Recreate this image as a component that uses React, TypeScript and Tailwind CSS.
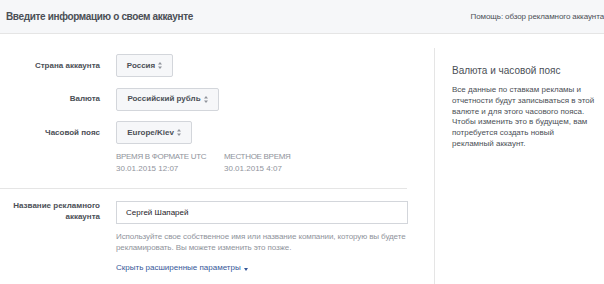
const UpDown = () => (
  <svg width="4" height="7" viewBox="0 0 4 7" className="ml-[3px] inline-block">
    <path d="M2 0 L4 2.5 L0 2.5 Z M0 4.5 L4 4.5 L2 7 Z" fill="#90949c" />
  </svg>
);

function SelectBox({ value, width }: { value: string; width: string }) {
  return (
    <div
      className={`${width} h-[23px] flex items-center justify-center border border-[#d3d6db] bg-[#f6f7f9] text-[8px] font-bold text-[#4b4f56] rounded-[2px]`}
    >
      {value}
      <UpDown />
    </div>
  );
}

function FieldRow({ label, children }: { label: string; children: React.ReactNode }) {
  return (
    <div className="flex items-center">
      <div className="w-[100px] text-right text-[8px] font-bold text-[#4b4f56]">{label}</div>
      <div className="ml-[16px]">{children}</div>
    </div>
  );
}

export default function App() {
  return (
    <div className="w-[604px] h-[284px] overflow-hidden bg-white [font-family:'Liberation_Sans',Arial,sans-serif]">
      {/* Header */}
      <div className="h-[34px] flex items-center justify-between pl-[6px] bg-[#f6f7f9] border-b border-[#e5e5e5]">
        <div className="text-[10px] tracking-[-0.35px] font-bold text-[#4b4f56]">Введите информацию о своем аккаунте</div>
        <div className="text-[8px] tracking-[-0.1px] text-[#4b4f56] whitespace-nowrap">Помощь: обзор рекламного аккаунта</div>
      </div>

      <div className="flex">
        {/* Form */}
        <div className="w-[434px] pt-[20px]">
          <div className="flex flex-col gap-[10.5px]">
            <FieldRow label="Страна аккаунта">
              <SelectBox value="Россия" width="w-[57px]" />
            </FieldRow>
            <FieldRow label="Валюта">
              <SelectBox value="Российский рубль" width="w-[103px]" />
            </FieldRow>
            <FieldRow label="Часовой пояс">
              <SelectBox value="Europe/Kiev" width="w-[76px]" />
            </FieldRow>
          </div>

          <div className="ml-[116px] mt-[7px] flex text-[8px] leading-[12px] text-[#90949c]">
            <div className="w-[108px]">
              <div className="tracking-[-0.3px]">ВРЕМЯ В ФОРМАТЕ UTC</div>
              <div>30.01.2015 12:07</div>
            </div>
            <div>
              <div className="tracking-[-0.3px]">МЕСТНОЕ ВРЕМЯ</div>
              <div>30.01.2015 4:07</div>
            </div>
          </div>

          <div className="mt-[13px] w-[407px] border-t border-[#e5e5e5]" />

          <div className="mt-[12px] flex items-start">
            <div className="w-[100px] -mt-[1px] text-right text-[8px] leading-[11px] font-bold text-[#4b4f56]">
              Название рекламного
              <br />
              аккаунта
            </div>
            <div className="ml-[16px] w-[292px]">
              <div className="h-[23px] flex items-center px-[9px] border border-[#d3d6db] text-[8px] text-[#1d2129]">
                Сергей Шапарей
              </div>
              <div className="mt-[7px] text-[8px] tracking-[-0.1px] leading-[11px] text-[#90949c]">
                Используйте свое собственное имя или название компании, которую вы будете рекламировать. Вы можете изменить это позже.
              </div>
              <div className="mt-[9px] flex items-center text-[8px] text-[#365899]">
                Скрыть расширенные параметры
                <svg width="4" height="3" viewBox="0 0 4 3" className="ml-[3px] mt-[2px]">
                  <path d="M0 0 L4 0 L2 3 Z" fill="#365899" />
                </svg>
              </div>
            </div>
          </div>
        </div>

        {/* Side panel */}
        <div className="mt-[14px] w-[170px] h-[236px] border-l border-[#e5e5e5] pl-[17px] pt-[16px]">
          <div className="text-[10px] leading-[13px] text-[#4b4f56]">Валюта и часовой пояс</div>
          <div className="mt-[8px] w-[145px] text-[8px] leading-[10.8px] text-[#4b4f56]">
            Все данные по ставкам рекламы и отчетности будут записываться в этой валюте и для этого часового пояса. Чтобы изменить это в будущем, вам потребуется создать новый рекламный аккаунт.
          </div>
        </div>
      </div>
    </div>
  );
}
